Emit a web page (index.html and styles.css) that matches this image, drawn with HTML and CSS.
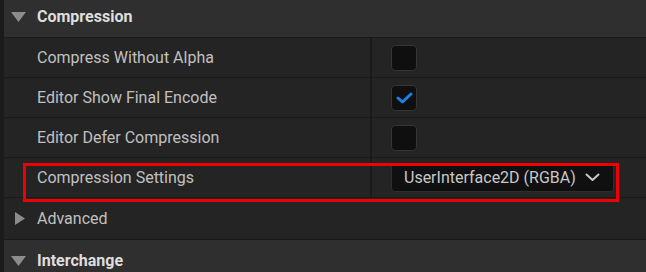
FILE: index.html
```html
<!DOCTYPE html>
<html lang="en">
<head>
  <meta charset="UTF-8" />
  <title>Details - Compression</title>
  <link rel="stylesheet" href="styles.css">
</head>
<body>
  <div class="panel">
    <div class="category">
      <svg class="arrow" width="15" height="10" viewBox="0 0 15 10"><polygon points="0,0 15,0 7.5,10" /></svg>
      Compression
    </div>

    <div class="row">
      <div class="name">Compress Without Alpha</div>
      <div class="value"><span class="checkbox"></span></div>
    </div>

    <div class="row">
      <div class="name">Editor Show Final Encode</div>
      <div class="value">
        <span class="checkbox">
          <svg width="17" height="12" viewBox="0 0 17 12"><polyline points="2,6 6.5,10 15,2" /></svg>
        </span>
      </div>
    </div>

    <div class="row">
      <div class="name">Editor Defer Compression</div>
      <div class="value"><span class="checkbox"></span></div>
    </div>

    <div class="row settings">
      <div class="name">Compression Settings</div>
      <div class="value">
        <div class="combo">
          UserInterface2D (RGBA)
          <svg width="15" height="9" viewBox="0 0 15 9"><polyline points="1.5,1.5 7.5,7 13.5,1.5" /></svg>
        </div>
      </div>
      <div class="highlight"></div>
    </div>

    <div class="row group">
      <svg class="arrow" width="10" height="13" viewBox="0 0 10 13"><polygon points="0,0 10,6.5 0,13" /></svg>
      Advanced
    </div>

    <div class="category">
      <svg class="arrow" width="15" height="10" viewBox="0 0 15 10"><polygon points="0,0 15,0 7.5,10" /></svg>
      Interchange
    </div>
  </div>
</body>
</html>
```

FILE: styles.css
```css
body {
  margin: 0;
  background-color: #1b1b1b;
  font-family: Roboto, "Liberation Sans", sans-serif;
  font-size: 16px;
  color: #c0c0c0;
  overflow: hidden;
}

/* the panel is scrolled a little, so the first header is cut at the top */
.panel {
  margin-left: 4px;
  margin-top: -4px;
  background-color: #1a1a1a;
}

.category {
  height: 41px;
  display: flex;
  align-items: center;
  background-color: #2f2f2f;
  color: #dedede;
  font-weight: bold;
  border-bottom: 1px solid #1a1a1a;
}

.category .arrow {
  margin-left: 7px;
  margin-right: 11px;
  fill: #8c8c8c;
}

.row {
  position: relative;
  height: 39px;
  display: flex;
  background-color: #242424;
  border-bottom: 1px solid #1a1a1a;
}

.name {
  width: 333px;
  padding-left: 33px;
  display: flex;
  align-items: center;
}

.value {
  flex: 1;
  display: flex;
  align-items: center;
  padding-left: 19px;
  border-left: 2px solid #1a1a1a;
}

.checkbox {
  width: 26px;
  height: 26px;
  box-sizing: border-box;
  border: 1px solid #353535;
  border-radius: 4px;
  background-color: #0f0f0f;
  display: flex;
  align-items: center;
  justify-content: center;
}

.checkbox svg {
  fill: none;
  stroke: #1c7fe6;
  stroke-width: 3;
  stroke-linecap: round;
  stroke-linejoin: round;
}

.combo {
  height: 29px;
  width: 223px;
  box-sizing: border-box;
  padding-left: 12px;
  display: flex;
  align-items: center;
  gap: 9px;
  background-color: #101010;
  border: 1px solid #2e2e2e;
  border-radius: 4px;
  color: #c8c8c8;
}

.combo svg {
  fill: none;
  stroke: #c8c8c8;
  stroke-width: 2;
  stroke-linecap: round;
  stroke-linejoin: round;
}

.highlight {
  position: absolute;
  z-index: 1;
  left: 19px;
  top: 5px;
  width: 590px;
  height: 33px;
  border: 3px solid #f00000;
}

.group {
  height: 41px;
  align-items: center;
}

.group .arrow {
  margin-left: 11px;
  margin-right: 12px;
  fill: #8c8c8c;
}
```
